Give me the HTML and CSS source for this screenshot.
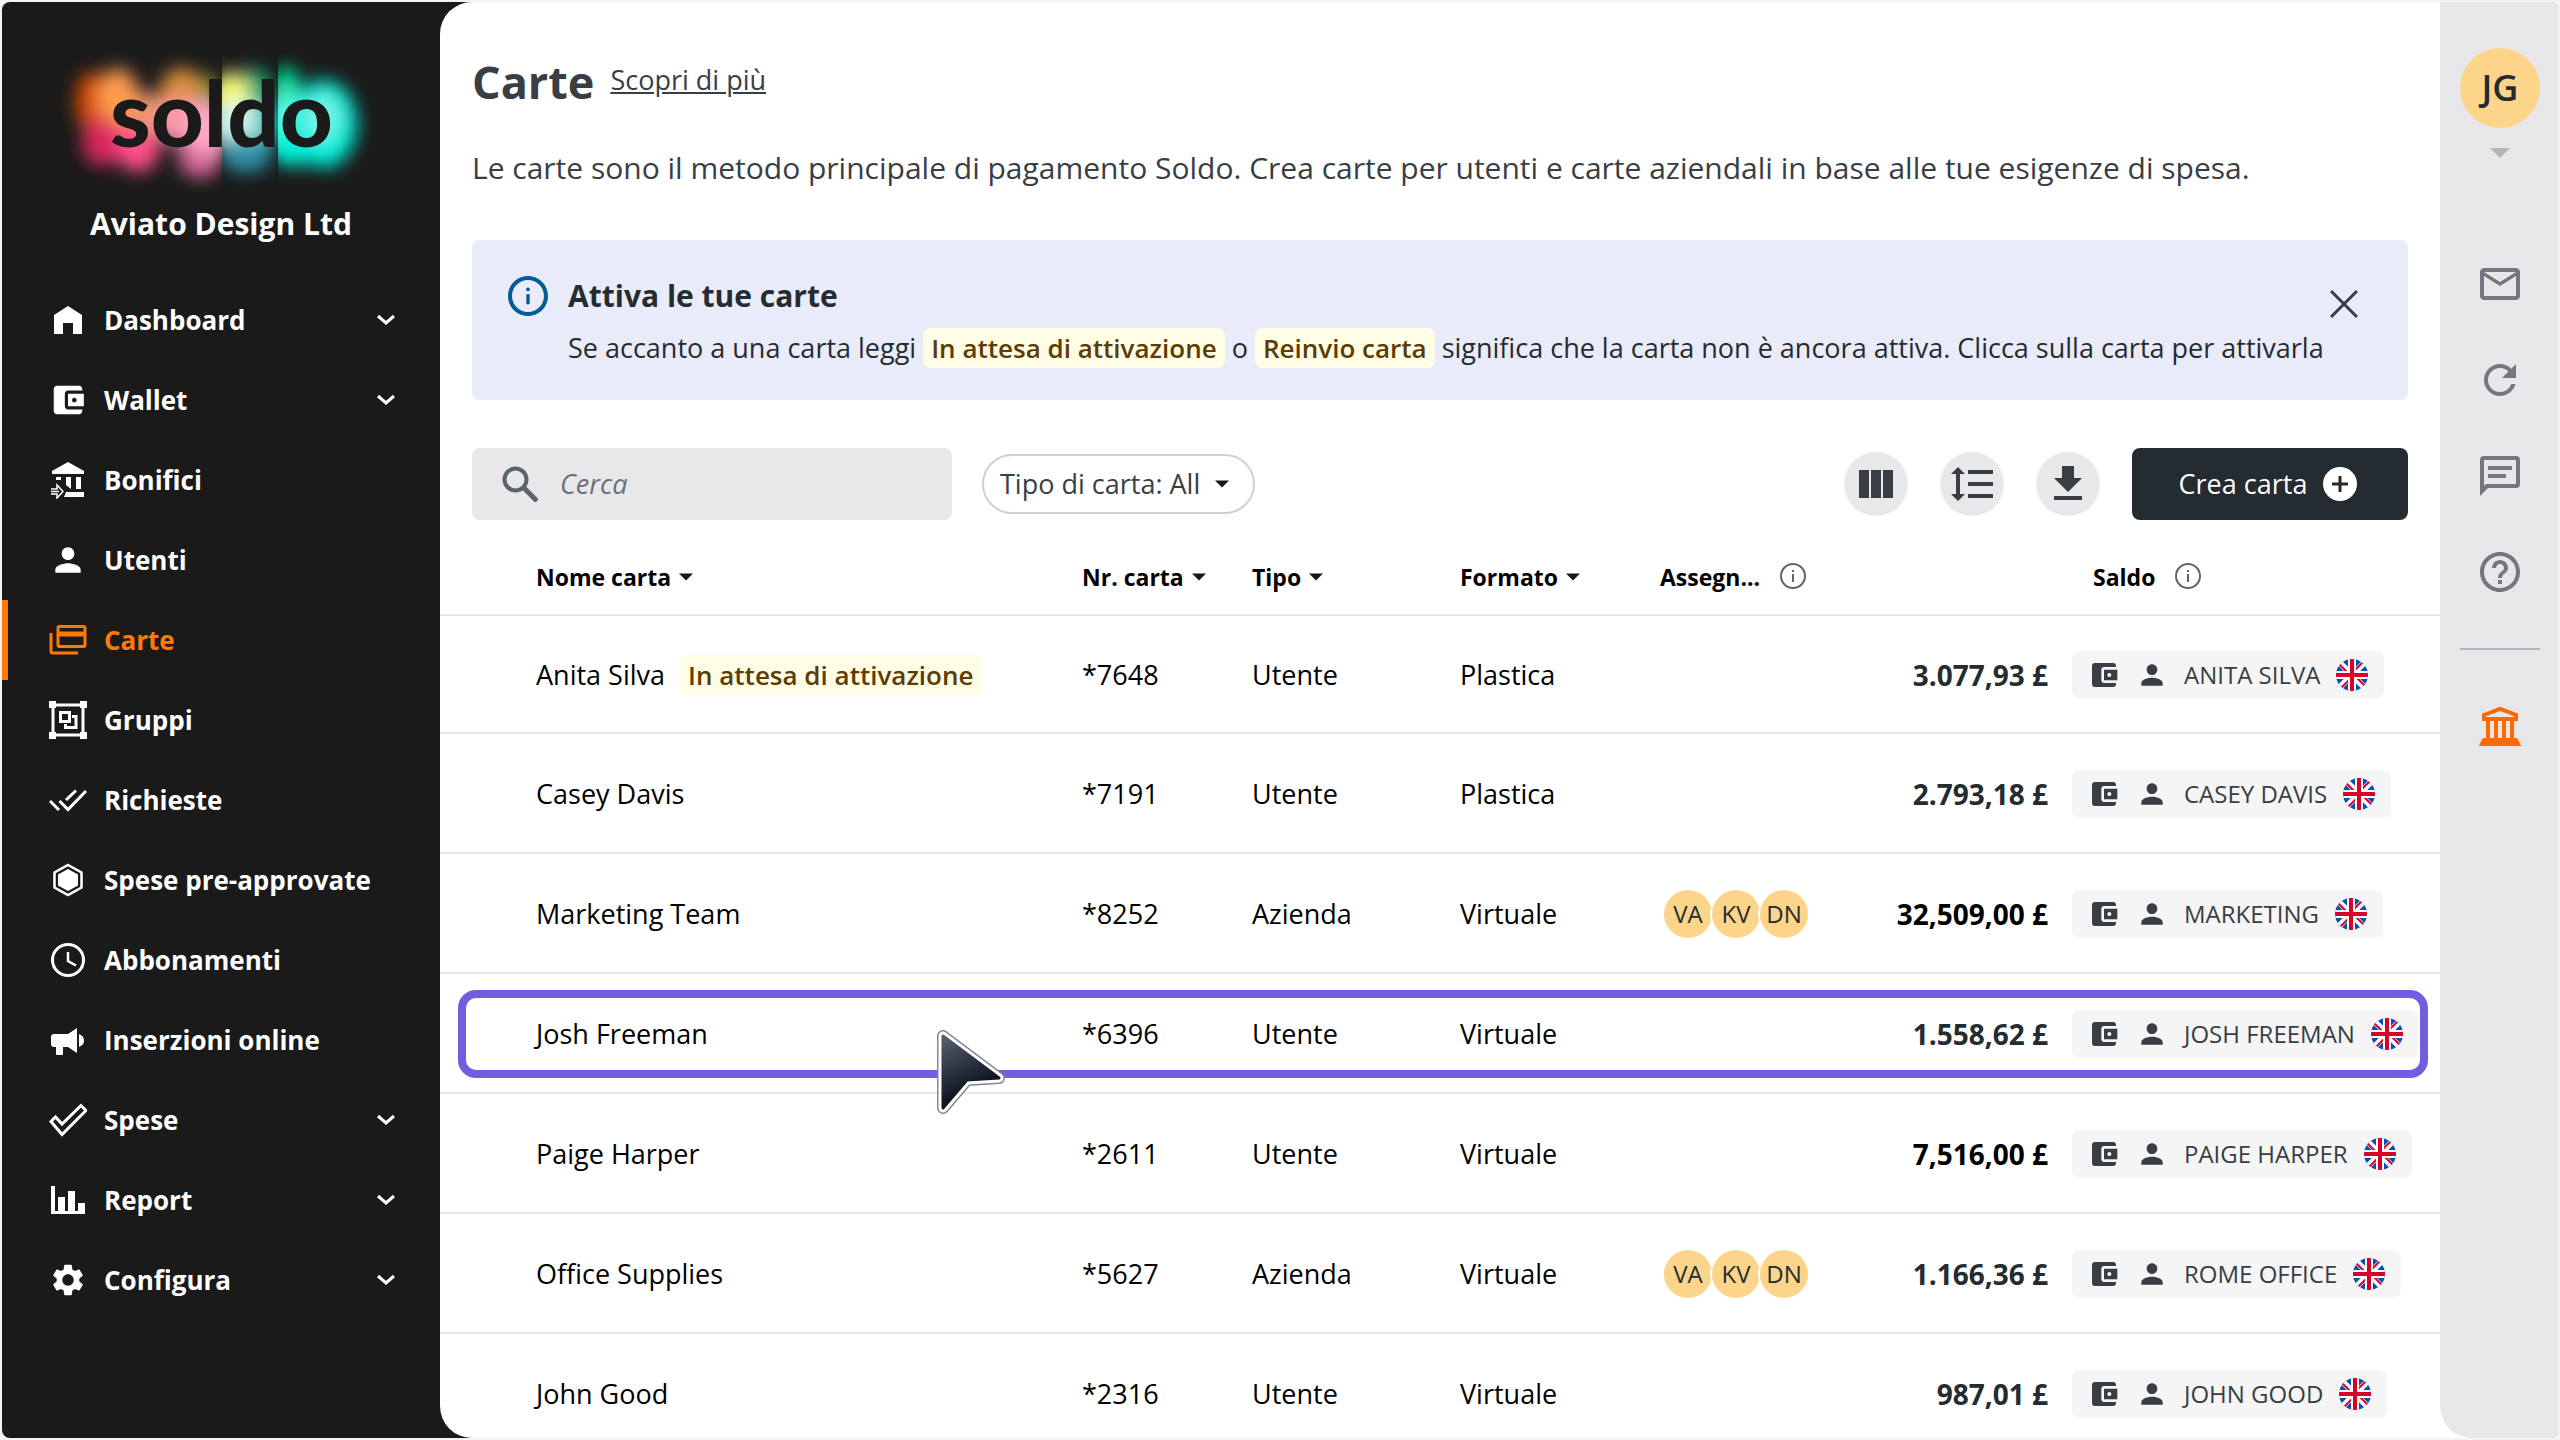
FILE: index.html
```html
<!DOCTYPE html>
<html lang="it">
<head>
  <meta charset="UTF-8">
  <title>Carte - Soldo</title>
  <link rel="stylesheet" href="styles.css">
</head>
<body>

<!-- shared icons -->
<svg class="sprite" aria-hidden="true">
  <symbol id="i-chevron" viewBox="0 0 20 12"><path d="M2 2l8 7 8-7" fill="none" stroke="currentColor" stroke-width="3"/></symbol>
  <symbol id="i-caret" viewBox="0 0 14 7"><path d="M0 0h14L7 7z" fill="currentColor"/></symbol>
  <symbol id="i-wallet" viewBox="0 0 24 24"><path fill="currentColor" d="M21 18v1c0 1.100-.9 2-2 2H5c-1.110 0-2-.9-2-2V5c0-1.100.89-2 2-2h14c1.100 0 2 .9 2 2v1h-9c-1.110 0-2 .9-2 2v8c0 1.100.89 2 2 2h9zm-9-2h10V8H12v8zm4-2.500c-.83 0-1.500-.67-1.500-1.500s.67-1.500 1.500-1.500 1.500.67 1.500 1.500-.67 1.500-1.500 1.500z"/></symbol>
  <symbol id="i-person" viewBox="0 0 24 24"><path fill="currentColor" d="M12 12c2.210 0 4-1.790 4-4s-1.790-4-4-4-4 1.790-4 4 1.790 4 4 4zm0 2c-2.670 0-8 1.340-8 4v2h16v-2c0-2.660-5.330-4-8-4z"/></symbol>
  <symbol id="i-info" viewBox="0 0 24 24"><path fill="currentColor" d="M11 7h2v2h-2zm0 4h2v6h-2zm1-11C5.400 0 0 5.400 0 12s5.400 12 12 12 12-5.400 12-12S18.600 0 12 0zm0 21.600c-5.300 0-9.600-4.300-9.600-9.600S6.700 2.400 12 2.400s9.600 4.300 9.600 9.600-4.300 9.600-9.600 9.600z"/></symbol>
  <symbol id="i-info-thin" viewBox="0 0 26 26"><circle cx="13" cy="13" r="12" fill="none" stroke="currentColor" stroke-width="2"/><path d="M12 7h2v2h-2zM12 11h2v8h-2z" fill="currentColor"/></symbol>
  <symbol id="i-flag" viewBox="0 0 32 32">
    <clipPath id="round"><circle cx="16" cy="16" r="16"/></clipPath>
    <g clip-path="url(#round)">
      <path fill="#0052b4" d="M0 0h32v32H0z"/>
      <path stroke="#fff" stroke-width="6" d="M0 0l32 32M32 0L0 32"/>
      <path stroke="#d80027" stroke-width="2" d="M1 3l12 12M31 29L19 17M29 1L17 13M3 31l12-12"/>
      <path stroke="#fff" stroke-width="8" d="M16 0v32M0 16h32"/>
      <path stroke="#d80027" stroke-width="4" d="M16 0v32M0 16h32"/>
    </g>
  </symbol>
</svg>

<div class="app">
  <aside class="sidebar">
    <svg class="logo" viewBox="0 0 438 202" role="img" aria-label="soldo">
      <defs>
        <filter id="glow" x="-50%" y="-50%" width="200%" height="200%"><feGaussianBlur stdDeviation="9"/></filter>
        <clipPath id="left"><path d="M0 0h220v202H0z"/></clipPath>
        <clipPath id="middle"><path d="M220 0h56v202h-56z"/></clipPath>
        <clipPath id="right"><path d="M276 0h162v202H276z"/></clipPath>
      </defs>
      <g clip-path="url(#left)"><g filter="url(#glow)">
        <ellipse cx="120" cy="120" rx="38" ry="36" fill="#ff7a70"/>
        <ellipse cx="90" cy="100" rx="16" ry="30" fill="#d94f00"/>
        <ellipse cx="100" cy="140" rx="20" ry="24" fill="#d8265c"/>
        <ellipse cx="116" cy="94" rx="20" ry="28" fill="#ff9c50"/>
        <ellipse cx="136" cy="146" rx="22" ry="24" fill="#ff4f88"/>
        <ellipse cx="152" cy="112" rx="22" ry="20" fill="#e8946c"/>
        <ellipse cx="180" cy="90" rx="22" ry="24" fill="#e09040"/>
        <ellipse cx="206" cy="92" rx="10" ry="20" fill="#8c9440"/>
        <ellipse cx="180" cy="120" rx="28" ry="22" fill="#ff98ac"/>
        <ellipse cx="198" cy="154" rx="22" ry="22" fill="#d8689a"/>
        <ellipse cx="208" cy="126" rx="26" ry="26" fill="#ffa8c8"/>
      </g></g>
      <g clip-path="url(#middle)"><g filter="url(#glow)">
        <ellipse cx="252" cy="88" rx="18" ry="22" fill="#12a878"/>
        <ellipse cx="228" cy="98" rx="20" ry="28" fill="#f8fa7c"/>
        <ellipse cx="236" cy="124" rx="28" ry="24" fill="#d0f4f0"/>
        <ellipse cx="268" cy="120" rx="14" ry="22" fill="#00b8b4"/>
        <ellipse cx="244" cy="152" rx="26" ry="18" fill="#2f94aa"/>
      </g></g>
      <g clip-path="url(#right)"><g filter="url(#glow)">
        <ellipse cx="284" cy="92" rx="15" ry="28" fill="#00e09c"/>
        <ellipse cx="282" cy="124" rx="22" ry="34" fill="#5cf8e0"/>
        <ellipse cx="290" cy="144" rx="22" ry="20" fill="#00f4dc"/>
        <ellipse cx="322" cy="122" rx="33" ry="44" fill="#00ecd8"/>
        <ellipse cx="320" cy="116" rx="16" ry="22" fill="#7cf4e8"/>
      </g></g>
      <text x="108" y="145" class="logo-text">soldo</text>
    </svg>
    <div class="company">Aviato Design Ltd</div>

    <nav class="menu">
      <a href="#" class="menu-item"><svg class="menu-icon" viewBox="0 0 38 38"><path fill="currentColor" d="M5 14L19 5l14 9v19h-9V22H14v11H5z"/></svg><span>Dashboard</span><svg class="chevron"><use href="#i-chevron"/></svg></a>
      <a href="#" class="menu-item"><svg class="menu-icon"><use href="#i-wallet"/></svg><span>Wallet</span><svg class="chevron"><use href="#i-chevron"/></svg></a>
      <a href="#" class="menu-item"><svg class="menu-icon" viewBox="0 0 38 38"><path fill="currentColor" d="M3 10L19 1l16 9v3H3zM7 16h5v3H7zM17 16h5v12l-5-4zM27 16h5v12h-5zM17 31h18v5H15z"/><path d="M2 28h6v-4l6 6.500-6 6.500v-4H2M2 30.500h8" fill="none" stroke="currentColor" stroke-width="1.500"/></svg><span>Bonifici</span></a>
      <a href="#" class="menu-item"><svg class="menu-icon"><use href="#i-person"/></svg><span>Utenti</span></a>
      <a href="#" class="menu-item active"><svg class="menu-icon" viewBox="0 0 38 38"><g fill="none" stroke="currentColor" stroke-width="3"><rect x="9" y="5.500" width="27" height="20" rx="1.500"/><path d="M2 12v18q0 2 2 2h25"/></g><path fill="currentColor" d="M9 10.500h27v5H9z"/></svg><span>Carte</span></a>
      <a href="#" class="menu-item"><svg class="menu-icon" viewBox="0 0 38 38"><g fill="none" stroke="currentColor" stroke-width="3"><path d="M4 4h30v30H4z"/><path d="M11.500 11.500h9v9h-9zM23 15.500h4v11H16.500V23"/></g><path fill="currentColor" d="M0 0h7v7H0zM31 0h7v7h-7zM0 31h7v7H0zM31 31h7v7h-7z"/></svg><span>Gruppi</span></a>
      <a href="#" class="menu-item"><svg class="menu-icon" viewBox="0 0 38 38"><path d="M1 20l9 9M10.500 20l8.500 8.500L37 10M17 19l10-9.500" fill="none" stroke="currentColor" stroke-width="3"/></svg><span>Richieste</span></a>
      <a href="#" class="menu-item"><svg class="menu-icon" viewBox="0 0 38 38"><path d="M19 4l13.500 7.500v15L19 34 5.500 26.500v-15z" fill="none" stroke="currentColor" stroke-width="2.500"/><path d="M19 8l10 5.500v11L19 30 9 24.500v-11z" fill="currentColor"/></svg><span>Spese pre-approvate</span></a>
      <a href="#" class="menu-item"><svg class="menu-icon" viewBox="0 0 38 38"><circle cx="19" cy="19" r="15.500" fill="none" stroke="currentColor" stroke-width="3"/><path d="M19 11v9l8 4.500" fill="none" stroke="currentColor" stroke-width="2.500"/></svg><span>Abbonamenti</span></a>
      <a href="#" class="menu-item"><svg class="menu-icon" viewBox="0 0 38 38"><path fill="currentColor" d="M5 13h14l9-6v25l-9-6h-5v7q0 1-1 1H8q-1 0-1-1v-7H5q-3 0-3-3v-7q0-3 3-3zM30 13q5 2 5 6.500T30 26z"/></svg><span>Inserzioni online</span></a>
      <a href="#" class="menu-item"><svg class="menu-icon" viewBox="0 0 38 38"><path d="M2 20.500L6.500 16l6.500 7L32 4.500l5 5L13 33.500z" fill="none" stroke="currentColor" stroke-width="3"/></svg><span>Spese</span><svg class="chevron"><use href="#i-chevron"/></svg></a>
      <a href="#" class="menu-item"><svg class="menu-icon" viewBox="0 0 38 38"><path fill="currentColor" d="M2 5h4v25h3V16h7v14h3V10h7v20h3v-8h7v11H2z"/></svg><span>Report</span><svg class="chevron"><use href="#i-chevron"/></svg></a>
      <a href="#" class="menu-item"><svg class="menu-icon" viewBox="0 0 24 24"><path fill="currentColor" d="M19.140 12.940c.04-.3.06-.61.06-.94 0-.32-.02-.64-.07-.94l2.030-1.580c.18-.14.23-.41.12-.61l-1.920-3.320c-.12-.22-.37-.29-.59-.22l-2.390.96c-.5-.38-1.030-.7-1.620-.94l-.36-2.540c-.04-.24-.24-.41-.48-.41h-3.840c-.24 0-.43.17-.47.41l-.36 2.540c-.59.24-1.130.57-1.620.94l-2.390-.96c-.22-.08-.47 0-.59.22L2.740 8.870c-.12.21-.08.47.12.61l2.030 1.580c-.05.3-.09.63-.09.94s.02.64.07.94l-2.030 1.580c-.18.14-.23.41-.12.61l1.920 3.320c.12.22.37.29.59.22l2.390-.96c.5.38 1.030.7 1.620.94l.36 2.540c.05.24.24.41.48.41h3.840c.24 0 .44-.17.47-.41l.36-2.540c.59-.24 1.130-.56 1.620-.94l2.390.96c.22.08.47 0 .59-.22l1.920-3.320c.12-.22.07-.47-.12-.61l-2.010-1.580zM12 15.600c-1.980 0-3.600-1.620-3.600-3.600s1.620-3.600 3.600-3.600 3.600 1.620 3.600 3.600-1.620 3.600-3.600 3.600z"/></svg><span>Configura</span><svg class="chevron"><use href="#i-chevron"/></svg></a>
    </nav>
  </aside>

  <div class="content">
  <main class="main">
    <header class="page-head">
      <h1>Carte</h1>
      <a href="#">Scopri di più</a>
    </header>
    <p class="intro">Le carte sono il metodo principale di pagamento Soldo. Crea carte per utenti e carte aziendali in base alle tue esigenze di spesa.</p>

    <section class="banner">
      <svg class="banner-icon"><use href="#i-info"/></svg>
      <div class="banner-body">
        <h2>Attiva le tue carte</h2>
        <p>Se accanto a una carta leggi <span class="tag">In attesa di attivazione</span> o <span class="tag">Reinvio carta</span> significa che la carta non è ancora attiva. Clicca sulla carta per attivarla</p>
      </div>
      <button class="close" aria-label="Chiudi"><svg viewBox="0 0 28 28"><path d="M1 1l26 26M27 1L1 27" stroke="currentColor" stroke-width="3"/></svg></button>
    </section>

    <div class="toolbar">
      <label class="search">
        <svg viewBox="0 0 36 36"><circle cx="13.500" cy="13.500" r="11" fill="none" stroke="currentColor" stroke-width="4"/><path d="M22 22l13 13" stroke="currentColor" stroke-width="5"/></svg>
        <input type="search" placeholder="Cerca" aria-label="Cerca">
      </label>
      <div class="filter">
        <select aria-label="Tipo di carta"><option>Tipo di carta: All</option></select>
        <svg class="caret"><use href="#i-caret"/></svg>
      </div>
      <div class="actions">
        <button class="round" aria-label="Colonne"><svg viewBox="0 0 36 36"><path fill="currentColor" d="M1 4h10v28H1zM13 4h10v28H13zM25 4h10v28H25z"/></svg></button>
        <button class="round" aria-label="Altezza righe"><svg viewBox="0 0 42 36"><path fill="currentColor" d="M7 1l7 7H9v20h5l-7 7-7-7h5V8H0zM17 4h25v4H17zM17 16h25v4H17zM17 28h25v4H17z"/></svg></button>
        <button class="round" aria-label="Scarica"><svg viewBox="0 0 36 36"><path fill="currentColor" d="M12 0h12v12h8L18 26 4 12h8zM4 30h28v4H4z"/></svg></button>
        <button class="create">Crea carta <svg viewBox="0 0 34 34"><circle cx="17" cy="17" r="17" fill="#fff"/><path d="M17 9v16M9 17h16" stroke="#242b31" stroke-width="3"/></svg></button>
      </div>
    </div>

    <table class="cards">
      <colgroup>
        <col class="c-name"><col class="c-number"><col class="c-type"><col class="c-format"><col class="c-assigned"><col class="c-amount"><col class="c-wallet">
      </colgroup>
      <thead>
        <tr>
          <th>Nome carta <svg class="caret"><use href="#i-caret"/></svg></th>
          <th>Nr. carta <svg class="caret"><use href="#i-caret"/></svg></th>
          <th>Tipo <svg class="caret"><use href="#i-caret"/></svg></th>
          <th>Formato <svg class="caret"><use href="#i-caret"/></svg></th>
          <th>Assegn... <svg class="info"><use href="#i-info-thin"/></svg></th>
          <th></th>
          <th class="saldo">Saldo <svg class="info"><use href="#i-info-thin"/></svg></th>
        </tr>
      </thead>
      <tbody>
        <tr>
          <td>Anita Silva <span class="tag">In attesa di attivazione</span></td><td>*7648</td><td>Utente</td><td>Plastica</td><td></td>
          <td class="amount">3.077,93 £</td>
          <td><span class="chip"><svg><use href="#i-wallet"/></svg><svg><use href="#i-person"/></svg><span>ANITA SILVA</span><svg class="flag"><use href="#i-flag"/></svg></span></td>
        </tr>
        <tr>
          <td>Casey Davis</td><td>*7191</td><td>Utente</td><td>Plastica</td><td></td>
          <td class="amount">2.793,18 £</td>
          <td><span class="chip"><svg><use href="#i-wallet"/></svg><svg><use href="#i-person"/></svg><span>CASEY DAVIS</span><svg class="flag"><use href="#i-flag"/></svg></span></td>
        </tr>
        <tr>
          <td>Marketing Team</td><td>*8252</td><td>Azienda</td><td>Virtuale</td>
          <td><span class="avatars"><span>VA</span><span>KV</span><span>DN</span></span></td>
          <td class="amount dark">32,509,00 £</td>
          <td><span class="chip"><svg><use href="#i-wallet"/></svg><svg><use href="#i-person"/></svg><span>MARKETING</span><svg class="flag"><use href="#i-flag"/></svg></span></td>
        </tr>
        <tr class="selected">
          <td>Josh Freeman
            <svg class="cursor" viewBox="0 0 70 86">
              <defs><linearGradient id="arrow" x1="0" y1="0" x2="0.4" y2="1"><stop offset="0" stop-color="#56606c"/><stop offset="0.8" stop-color="#101624"/></linearGradient></defs>
              <path d="M7 7v72l24-28 32-2z" fill="#82868f" stroke="#82868f" stroke-width="12" stroke-linejoin="round"/>
              <path d="M7 7v72l24-28 32-2z" fill="#fff" stroke="#fff" stroke-width="9" stroke-linejoin="round"/>
              <path d="M7 7v72l24-28 32-2z" fill="url(#arrow)" stroke="url(#arrow)" stroke-width="3" stroke-linejoin="round"/>
            </svg>
          </td><td>*6396</td><td>Utente</td><td>Virtuale</td><td></td>
          <td class="amount">1.558,62 £</td>
          <td><span class="chip"><svg><use href="#i-wallet"/></svg><svg><use href="#i-person"/></svg><span>JOSH FREEMAN</span><svg class="flag"><use href="#i-flag"/></svg></span></td>
        </tr>
        <tr>
          <td>Paige Harper</td><td>*2611</td><td>Utente</td><td>Virtuale</td><td></td>
          <td class="amount dark">7,516,00 £</td>
          <td><span class="chip"><svg><use href="#i-wallet"/></svg><svg><use href="#i-person"/></svg><span>PAIGE HARPER</span><svg class="flag"><use href="#i-flag"/></svg></span></td>
        </tr>
        <tr>
          <td>Office Supplies</td><td>*5627</td><td>Azienda</td><td>Virtuale</td>
          <td><span class="avatars"><span>VA</span><span>KV</span><span>DN</span></span></td>
          <td class="amount">1.166,36 £</td>
          <td><span class="chip"><svg><use href="#i-wallet"/></svg><svg><use href="#i-person"/></svg><span>ROME OFFICE</span><svg class="flag"><use href="#i-flag"/></svg></span></td>
        </tr>
        <tr>
          <td>John Good</td><td>*2316</td><td>Utente</td><td>Virtuale</td><td></td>
          <td class="amount">987,01 £</td>
          <td><span class="chip"><svg><use href="#i-wallet"/></svg><svg><use href="#i-person"/></svg><span>JOHN GOOD</span><svg class="flag"><use href="#i-flag"/></svg></span></td>
        </tr>
      </tbody>
    </table>
  </main>

  <aside class="rail">
    <button class="profile"><span class="profile-badge">JG</span><svg viewBox="0 0 20 10"><path d="M0 0h20L10 10z" fill="#b5b6bb"/></svg></button>
    <nav class="rail-nav">
      <a href="#" aria-label="Messaggi"><svg viewBox="0 0 48 48"><path fill="currentColor" d="M40 8H8c-2.210 0-4 1.790-4 4v24c0 2.210 1.790 4 4 4h32c2.210 0 4-1.790 4-4V12c0-2.210-1.790-4-4-4zm0 28H8V16l16 10 16-10v20zM24 22L8 12h32L24 22z"/></svg></a>
      <a href="#" aria-label="Aggiorna"><svg viewBox="0 0 48 48"><path fill="currentColor" d="M35.300 12.700C32.410 9.800 28.420 8 24 8 15.160 8 8.020 15.160 8.020 24S15.160 40 24 40c7.450 0 13.690-5.100 15.460-12H35.300c-1.650 4.660-6.070 8-11.300 8-6.630 0-12-5.370-12-12s5.370-12 12-12c3.310 0 6.280 1.380 8.450 3.550L26 22h14V8l-4.700 4.700z"/></svg></a>
      <a href="#" aria-label="Chat"><svg viewBox="0 0 48 48"><path fill="currentColor" d="M8 4h32q4 0 4 4v24q0 4-4 4H12l-8 8V8q0-4 4-4zm0 4v26l2-2h30V8zM12 14h24v4H12zM12 22h18v4H12z" fill-rule="evenodd"/></svg></a>
      <a href="#" aria-label="Aiuto"><svg viewBox="0 0 48 48"><path fill="currentColor" d="M22 36h4v-4h-4v4zm2-32C12.950 4 4 12.950 4 24s8.950 20 20 20 20-8.950 20-20S35.050 4 24 4zm0 36c-8.820 0-16-7.180-16-16S15.180 8 24 8s16 7.180 16 16-7.180 16-16 16zm0-28c-4.420 0-8 3.580-8 8h4c0-2.210 1.790-4 4-4s4 1.790 4 4c0 4-6 3.500-6 10h4c0-4.500 6-5 6-10 0-4.420-3.580-8-8-8z"/></svg></a>
      <a href="#" class="bank" aria-label="Banca"><svg viewBox="0 0 48 48"><g fill="none" stroke="currentColor" stroke-width="4"><path d="M8 13l16-6 16 6v4H8z"/><path d="M12 18v20M20 18v20M28 18v20M36 18v20"/><path d="M8 38h32l2 4H6z"/></g></svg></a>
    </nav>
  </aside>
  </div>
</div>

</body>
</html>
```
FILE: styles.css
```css
*, *::after {
  box-sizing: border-box;
}

body {
  margin: 0;
  padding: 2px;
  height: 100vh;
  background: #f3f3f4;
  color: #000;
  font-family: "Segoe UI", "Open Sans", "Noto Sans", sans-serif;
  font-size: 27px;
  line-height: 40px;
  overflow: hidden;
}

button, input, select {
  font: inherit;
  color: inherit;
  border: 0;
  padding: 0;
  background: none;
}

button {
  cursor: pointer;
}

svg {
  flex: none;
}

.sprite {
  position: absolute;
  width: 0;
  height: 0;
}

.app {
  display: flex;
  height: 100%;
  background: #1a1a1a;
  border-radius: 8px;
  overflow: hidden;
}

/* sidebar */
.sidebar {
  width: 438px;
  flex: none;
  color: #fff;
  font-size: 26px;
  font-weight: 700;
}

.logo {
  display: block;
  width: 100%;
}

.logo-text {
  font-family: Lato, sans-serif;
  font-weight: 900;
  font-size: 92px;
  fill: #1a1a1a;
}

.company {
  font-size: 30px;
  text-align: center;
}

.menu {
  margin-top: 36px;
}

.menu-item {
  display: flex;
  align-items: center;
  gap: 17px;
  height: 80px;
  padding: 0 44px 0 47px;
  color: #fff;
  text-decoration: none;
}

.menu-item span {
  flex: 1;
}

/* orange marker on the left edge */
.menu-item.active {
  background: linear-gradient(#ff7a00, #ff7a00) no-repeat left / 6px 100%;
  color: #ff7a00;
}

.menu-icon {
  width: 38px;
  height: 38px;
}

.chevron {
  width: 20px;
  height: 12px;
}

/* main */
.content {
  display: flex;
  flex: 1;
  min-width: 0;
  background: #fff;
  border-radius: 32px 0 0 32px;
  overflow: hidden;
}

.main {
  flex: 1;
  min-width: 0;
  overflow: hidden;
}

.page-head {
  display: flex;
  align-items: flex-start;
  gap: 16px;
  padding: 48px 32px 0;
  color: #383e44;
}

.page-head h1 {
  margin: 0;
  font-size: 45px;
  line-height: 64px;
}

.page-head a {
  color: inherit;
  line-height: 60px;
}

.intro {
  margin: 30px 32px 0;
  font-size: 30px;
  line-height: 48px;
  color: #383e44;
}

.banner {
  display: flex;
  margin: 48px 32px 0;
  padding: 36px 50px 32px 36px;
  background: #e9ebf8;
  border-radius: 8px;
  color: #242b31;
}

.banner-icon {
  width: 40px;
  height: 40px;
  color: #005b96;
}

.banner-body {
  flex: 1;
  margin-left: 20px;
  white-space: nowrap;
}

.banner h2 {
  margin: 0;
  font-size: 30px;
}

.banner p {
  margin: 12px 0 0;
}

.tag {
  display: inline-block;
  padding: 0 8px;
  border-radius: 8px;
  background: #fffde6;
  color: #5c3c00;
  font-size: 26px;
  font-weight: 600;
}

.close {
  width: 28px;
  height: 28px;
  margin-top: 14px;
}

.close svg {
  display: block;
  width: 28px;
  height: 28px;
  color: #383e44;
}

.toolbar {
  display: flex;
  align-items: center;
  gap: 30px;
  margin: 48px 32px 0;
  color: #383e44;
}

.search {
  display: flex;
  align-items: center;
  gap: 22px;
  width: 480px;
  height: 72px;
  padding: 0 30px;
  border-radius: 8px;
  background: #e8e8ea;
  color: #5c636b;
}

.search svg {
  width: 36px;
  height: 36px;
}

.search input {
  flex: 1;
  min-width: 0;
  outline: 0;
}

.search input::placeholder {
  color: #6b7078;
  font-style: italic;
}

.filter {
  position: relative;
}

.filter select {
  appearance: none;
  height: 60px;
  padding: 0 52px 0 16px;
  border: 2px solid #cfd0d5;
  border-radius: 30px;
}

.caret {
  width: 14px;
  height: 8px;
  margin-left: 2px;
  vertical-align: 5px;
  color: #14191c;
}

.filter .caret {
  position: absolute;
  right: 26px;
  top: 26px;
}

.actions {
  display: flex;
  align-items: center;
  gap: 32px;
  margin-left: auto;
}

.round {
  display: flex;
  align-items: center;
  justify-content: center;
  width: 64px;
  height: 64px;
  border-radius: 50%;
  background: #e8e8ea;
}

.round svg {
  height: 36px;
}

.create {
  display: flex;
  align-items: center;
  justify-content: center;
  gap: 16px;
  width: 276px;
  height: 72px;
  padding-right: 4px;
  border-radius: 8px;
  background: #242b31;
  color: #fff;
}

.create svg {
  width: 34px;
}

/* table */
.cards {
  width: 100%;
  margin-top: 20px;
  table-layout: fixed;
  border-collapse: separate;
  border-spacing: 0;
}

.c-name { width: 642px; }
.c-number { width: 170px; }
.c-type { width: 208px; }
.c-format { width: 200px; }
.c-assigned { width: 190px; }
.c-amount { width: 198px; }

.cards th, .cards td {
  padding: 0;
  border-bottom: 2px solid #e6e6e8;
  text-align: left;
  white-space: nowrap;
}

.cards th {
  height: 76px;
  font-size: 23px;
}

.cards td {
  height: 120px;
  padding-top: 2px;
}

.cards tbody tr:first-child td {
  height: 118px;
}

.cards th:first-child, .cards td:first-child {
  padding-left: 96px;
}

.cards .saldo {
  padding-left: 45px;
}

.cards .tag {
  margin-left: 8px;
}

.info {
  width: 26px;
  height: 26px;
  margin-left: 14px;
  vertical-align: -3px;
  color: #5f646c;
}

.cards .amount {
  text-align: right;
  font-size: 28px;
  font-weight: 700;
  color: #242b31;
}

.cards .dark {
  color: #000;
}

.cards td:last-child {
  padding-left: 24px;
}

.chip {
  display: inline-flex;
  align-items: center;
  gap: 16px;
  height: 48px;
  padding: 0 16px;
  border-radius: 8px;
  background: #f5f5f6;
  color: #383e44;
  font-size: 24px;
  vertical-align: middle;
}

.chip svg {
  width: 32px;
  height: 32px;
}

.avatars {
  display: flex;
  margin-left: 2px;
  font-size: 24px;
  color: #242b31;
}

.avatars span {
  width: 52px;
  height: 52px;
  margin-right: -4px;
  border: 2px solid #fff;
  border-radius: 50%;
  background: #fcd58a;
  line-height: 48px;
  text-align: center;
}

/* outline around the selected row */
.selected {
  position: relative;
}

.selected td:first-child::after {
  content: "";
  position: absolute;
  top: 16px;
  right: 12px;
  left: 18px;
  height: 88px;
  border: 8px solid #735cdd;
  border-radius: 18px;
}

.cursor {
  position: absolute;
  z-index: 1;
  left: 496px;
  top: 55px;
  width: 70px;
  height: 86px;
}

/* right rail */
.rail {
  display: flex;
  flex-direction: column;
  align-items: center;
  width: 118px;
  flex: none;
  padding: 46px 0 0 2px;
  border-radius: 0 0 0 32px;
  background: #e7e7e9;
}

.profile {
  display: flex;
  flex-direction: column;
  align-items: center;
  gap: 20px;
}

.profile-badge {
  width: 80px;
  border-radius: 50%;
  background: #fcd58a;
  color: #242b31;
  font-size: 36px;
  font-weight: 600;
  line-height: 80px;
}

.profile svg {
  width: 20px;
}

.rail-nav {
  display: flex;
  flex-direction: column;
  align-items: center;
  gap: 48px;
  margin-top: 102px;
  color: #747780;
}

.rail-nav a {
  display: block;
  height: 48px;
  color: inherit;
}

.rail-nav svg {
  width: 48px;
  height: 48px;
}

.rail-nav .bank {
  width: 80px;
  height: 104px;
  margin-top: 4px;
  padding-top: 52px;
  border-top: 2px solid #b5b6bb;
  color: #ff6a00;
  text-align: center;
}
```
